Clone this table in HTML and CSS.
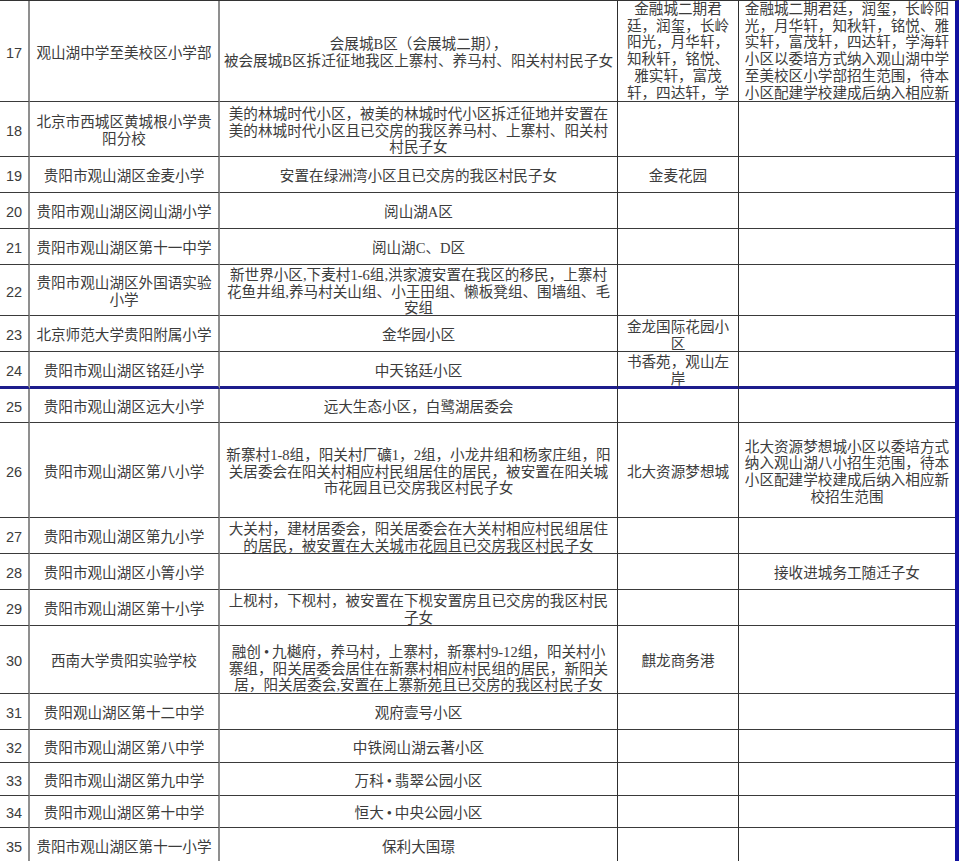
FILE: index.html
```html
<!DOCTYPE html>
<html lang="zh-CN">
<head>
<meta charset="utf-8">
<title>观山湖区学校划片范围</title>
<link rel="stylesheet" href="styles.css">
</head>
<body>
<div class="sheet">
  <div class="c num">17</div>
  <div class="c name"><div>观山湖中学至美校区小学部</div></div>
  <div class="c area"><div>会展城B区（会展城二期），<br>被会展城B区拆迁征地我区上寨村、养马村、阳关村村民子女</div></div>
  <div class="c house top"><div>金融城二期君<br>廷，润玺，长岭<br>阳光，月华轩，<br>知秋轩，铭悦、<br>雅实轩，富茂<br>轩，四达轩，学</div></div>
  <div class="c note top"><div>金融城二期君廷，润玺，长岭阳<br>光，月华轩，知秋轩，铭悦、雅<br>实轩，富茂轩，四达轩，学海轩<br>小区以委培方式纳入观山湖中学<br>至美校区小学部招生范围，待本<br>小区配建学校建成后纳入相应新</div></div>

  <div class="c num">18</div>
  <div class="c name"><div>北京市西城区黄城根小学贵<br>阳分校</div></div>
  <div class="c area"><div>美的林城时代小区，被美的林城时代小区拆迁征地并安置在<br>美的林城时代小区且已交房的我区养马村、上寨村、阳关村<br>村民子女</div></div>
  <div class="c house"></div>
  <div class="c note"></div>

  <div class="c num">19</div>
  <div class="c name"><div>贵阳市观山湖区金麦小学</div></div>
  <div class="c area"><div>安置在绿洲湾小区且已交房的我区村民子女</div></div>
  <div class="c house"><div>金麦花园</div></div>
  <div class="c note"></div>

  <div class="c num">20</div>
  <div class="c name"><div>贵阳市观山湖区阅山湖小学</div></div>
  <div class="c area"><div>阅山湖A区</div></div>
  <div class="c house"></div>
  <div class="c note"></div>

  <div class="c num">21</div>
  <div class="c name"><div>贵阳市观山湖区第十一中学</div></div>
  <div class="c area"><div>阅山湖C、D区</div></div>
  <div class="c house"></div>
  <div class="c note"></div>

  <div class="c num">22</div>
  <div class="c name"><div>贵阳市观山湖区外国语实验<br>小学</div></div>
  <div class="c area"><div>新世界小区,下麦村1-6组,洪家渡安置在我区的移民，上寨村<br>花鱼井组,养马村关山组、小王田组、懒板凳组、围墙组、毛<br>安组</div></div>
  <div class="c house"></div>
  <div class="c note"></div>

  <div class="c num">23</div>
  <div class="c name"><div>北京师范大学贵阳附属小学</div></div>
  <div class="c area"><div>金华园小区</div></div>
  <div class="c house"><div>金龙国际花园小<br>区</div></div>
  <div class="c note"></div>

  <div class="c num sep">24</div>
  <div class="c name sep"><div>贵阳市观山湖区铭廷小学</div></div>
  <div class="c area sep"><div>中天铭廷小区</div></div>
  <div class="c house sep"><div>书香苑，观山左<br>岸</div></div>
  <div class="c note sep"></div>

  <div class="c num">25</div>
  <div class="c name"><div>贵阳市观山湖区远大小学</div></div>
  <div class="c area"><div>远大生态小区，白鹭湖居委会</div></div>
  <div class="c house"></div>
  <div class="c note"></div>

  <div class="c num">26</div>
  <div class="c name"><div>贵阳市观山湖区第八小学</div></div>
  <div class="c area"><div>新寨村1-8组，阳关村厂礦1，2组，小龙井组和杨家庄组，阳<br>关居委会在阳关村相应村民组居住的居民，被安置在阳关城<br>市花园且已交房我区村民子女</div></div>
  <div class="c house"><div>北大资源梦想城</div></div>
  <div class="c note"><div>北大资源梦想城小区以委培方式<br>纳入观山湖八小招生范围，待本<br>小区配建学校建成后纳入相应新<br>校招生范围</div></div>

  <div class="c num">27</div>
  <div class="c name"><div>贵阳市观山湖区第九小学</div></div>
  <div class="c area"><div>大关村，建材居委会，阳关居委会在大关村相应村民组居住<br>的居民，被安置在大关城市花园且已交房我区村民子女</div></div>
  <div class="c house"></div>
  <div class="c note"></div>

  <div class="c num">28</div>
  <div class="c name"><div>贵阳市观山湖区小箐小学</div></div>
  <div class="c area"></div>
  <div class="c house"></div>
  <div class="c note"><div>接收进城务工随迁子女</div></div>

  <div class="c num">29</div>
  <div class="c name"><div>贵阳市观山湖区第十小学</div></div>
  <div class="c area"><div>上枧村，下枧村，被安置在下枧安置房且已交房的我区村民<br>子女</div></div>
  <div class="c house"></div>
  <div class="c note"></div>

  <div class="c num">30</div>
  <div class="c name"><div>西南大学贵阳实验学校</div></div>
  <div class="c area low"><div>融创<span class="dot">•</span>九樾府，养马村，上寨村，新寨村9-12组，阳关村小<br>寨组，阳关居委会居住在新寨村相应村民组的居民，新阳关<br>居，阳关居委会,安置在上寨新苑且已交房的我区村民子女</div></div>
  <div class="c house"><div>麒龙商务港</div></div>
  <div class="c note"></div>

  <div class="c num">31</div>
  <div class="c name"><div>贵阳观山湖区第十二中学</div></div>
  <div class="c area"><div>观府壹号小区</div></div>
  <div class="c house"></div>
  <div class="c note"></div>

  <div class="c num">32</div>
  <div class="c name"><div>贵阳市观山湖区第八中学</div></div>
  <div class="c area"><div>中铁阅山湖云著小区</div></div>
  <div class="c house"></div>
  <div class="c note"></div>

  <div class="c num">33</div>
  <div class="c name"><div>贵阳市观山湖区第九中学</div></div>
  <div class="c area"><div>万科<span class="dot">•</span>翡翠公园小区</div></div>
  <div class="c house"></div>
  <div class="c note"></div>

  <div class="c num">34</div>
  <div class="c name"><div>贵阳市观山湖区第十中学</div></div>
  <div class="c area"><div>恒大<span class="dot">•</span>中央公园小区</div></div>
  <div class="c house"></div>
  <div class="c note"></div>

  <div class="c num">35</div>
  <div class="c name"><div>贵阳市观山湖区第十一小学</div></div>
  <div class="c area"><div>保利大国璟</div></div>
  <div class="c house"></div>
  <div class="c note"></div>
</div>
</body>
</html>
```

FILE: styles.css
```css
html, body {
  margin: 0;
  padding: 0;
  background: #ffffff;
  overflow: hidden;
}

.sheet {
  display: grid;
  width: max-content;
  grid-template-columns: 30px 190px 398px 121px 216px;
  grid-template-rows: 101px 55px 36px 36px 36px 51px 36px 37px 34px 95px 36px 36px 36px 68px 36px 33px 33px 32px 36px;
  border-top: 1px solid #333333;
  border-right: 4px solid #1111a0;
  font-family: "Liberation Serif", "Noto Sans CJK SC", serif;
  font-size: 14.6px;
  line-height: 16.7px;
  color: #3c3c3c;
}

.c {
  box-sizing: border-box;
  display: flex;
  align-items: center;
  justify-content: center;
  text-align: center;
  white-space: nowrap;
  overflow: hidden;
  padding-top: 4px;
  border-bottom: 1px solid #3a3a3a;
  border-right: 1px solid #2e2e2e;
}

.num {
  font-family: "Liberation Sans", sans-serif;
  font-size: 14.5px;
  border-right: 2px solid #8f8f8f;
}

.name {
  border-right: 2px solid #8f8f8f;
}

.note {
  border-right: none;
}

.top {
  align-items: flex-start;
  padding-top: 0;
}

.low {
  align-items: flex-start;
  padding-top: 18px;
}

.sep {
  border-bottom: 3px solid #1d1d8c;
}

.dot {
  font-family: "Liberation Serif", serif;
  margin: 0 3px;
}
```
